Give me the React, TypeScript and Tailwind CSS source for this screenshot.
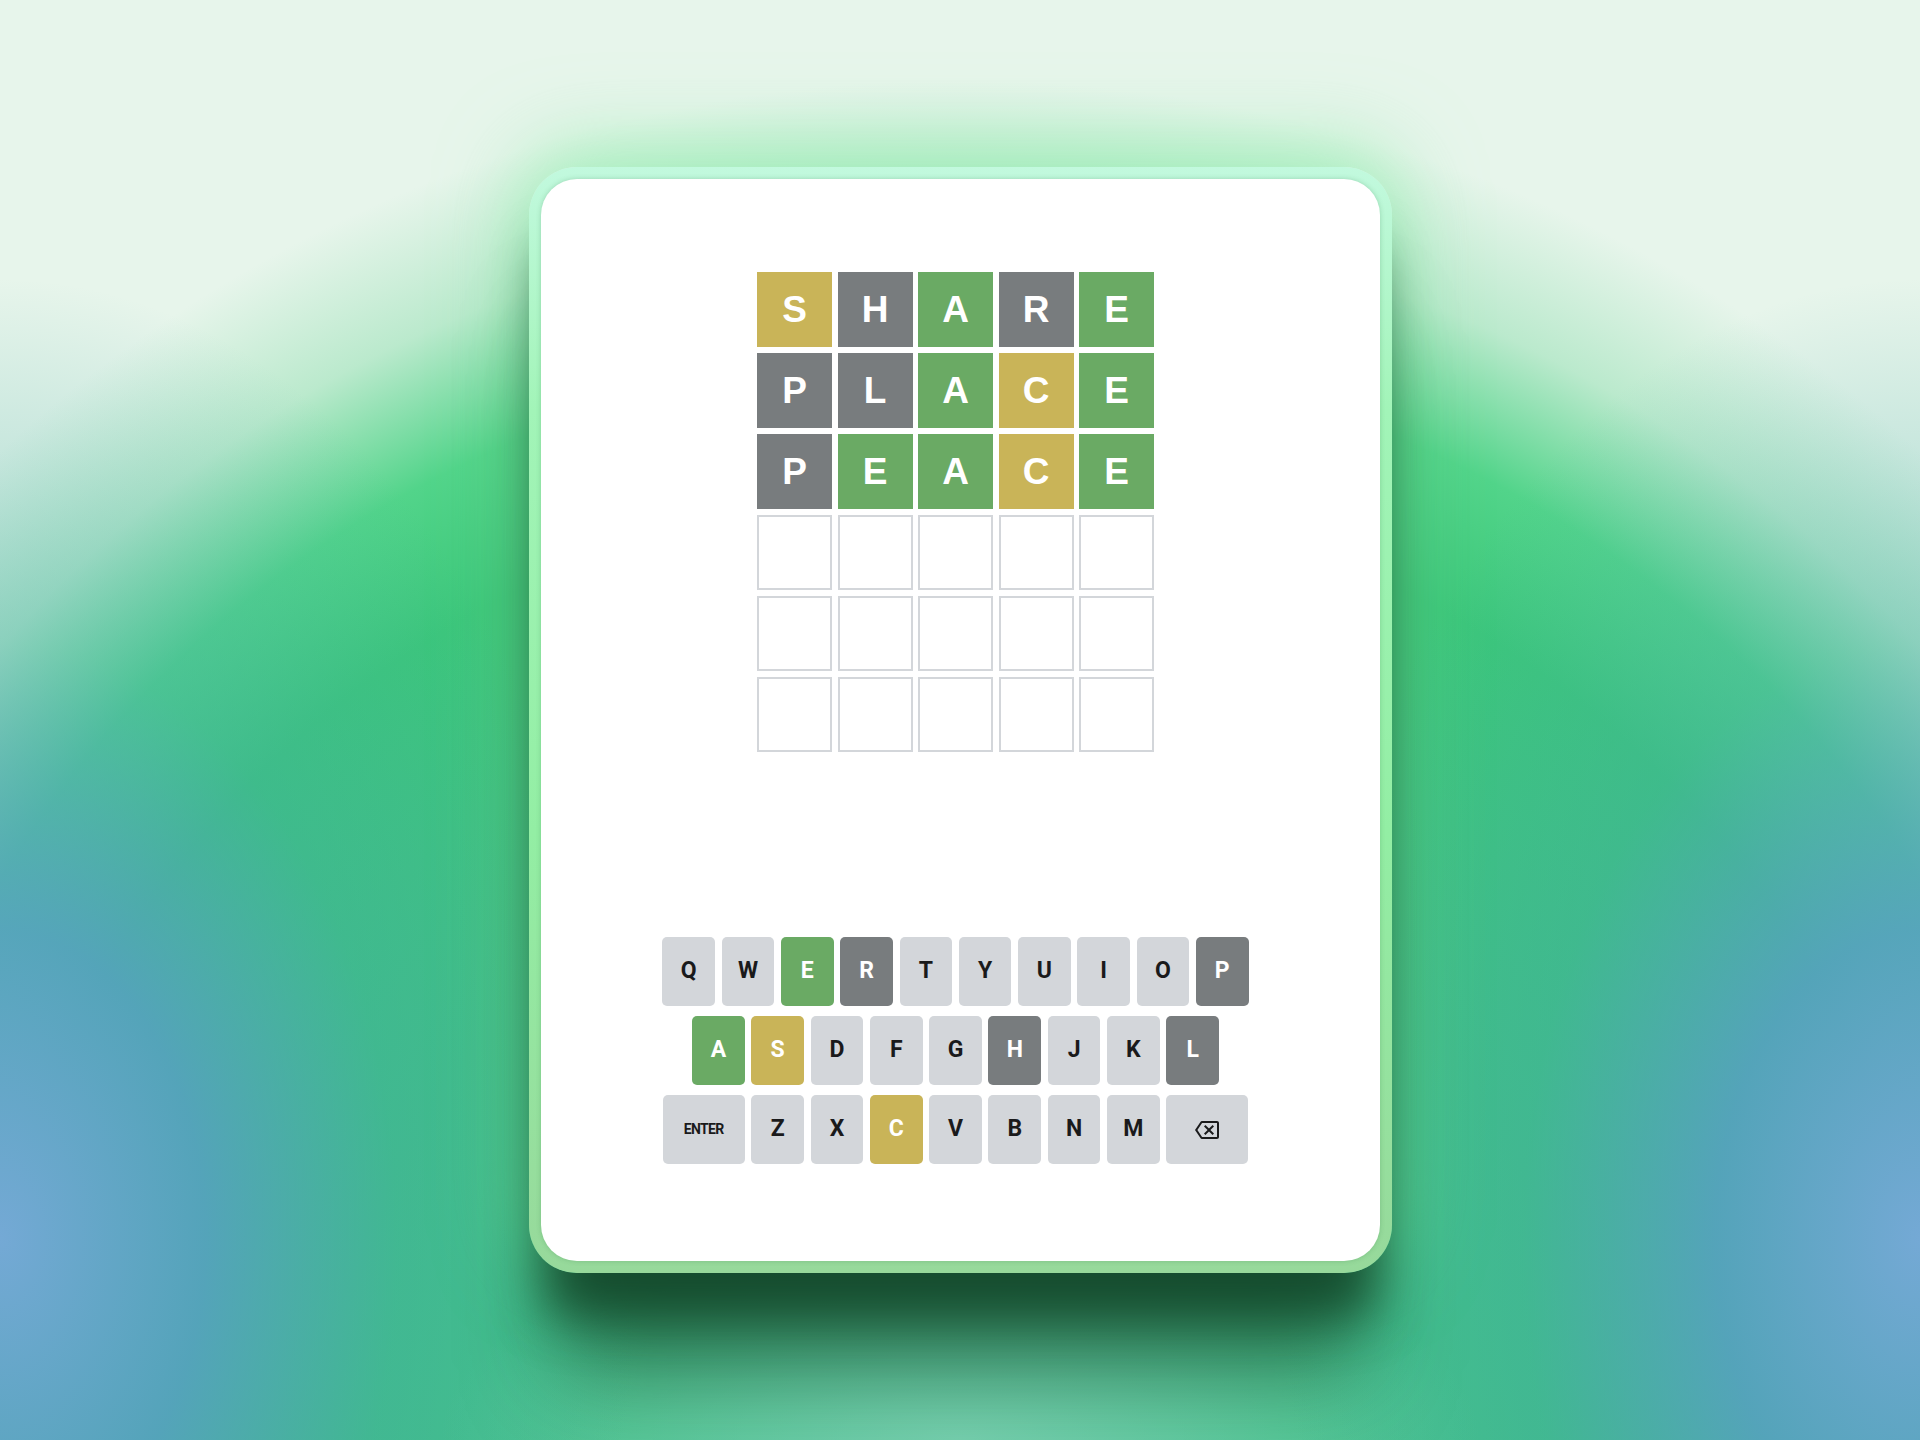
import React from "react";

type S = "g" | "y" | "x" | "e";

const rows: { l: string; s: S }[][] = [
  [
    { l: "S", s: "y" },
    { l: "H", s: "x" },
    { l: "A", s: "g" },
    { l: "R", s: "x" },
    { l: "E", s: "g" },
  ],
  [
    { l: "P", s: "x" },
    { l: "L", s: "x" },
    { l: "A", s: "g" },
    { l: "C", s: "y" },
    { l: "E", s: "g" },
  ],
  [
    { l: "P", s: "x" },
    { l: "E", s: "g" },
    { l: "A", s: "g" },
    { l: "C", s: "y" },
    { l: "E", s: "g" },
  ],
];

const keyState: Record<string, S> = {
  E: "g",
  A: "g",
  S: "y",
  C: "y",
  R: "x",
  P: "x",
  H: "x",
  L: "x",
};

function tileClass(s: S) {
  if (s === "g") return "bg-[#6aaa64] text-white";
  if (s === "y") return "bg-[#c9b458] text-white";
  if (s === "x") return "bg-[#787c7e] text-white";
  return "bg-white border-2 border-[#d3d6da]";
}

function keyClass(s: S | undefined) {
  if (s === "g") return "bg-[#6aaa64] text-white";
  if (s === "y") return "bg-[#c9b458] text-white";
  if (s === "x") return "bg-[#787c7e] text-white";
  return "bg-[#d3d6da] text-[#1a1a1b]";
}

function Tile({ l, s }: { l?: string; s: S }) {
  return (
    <div
      className={`w-[75px] h-[75px] flex items-center justify-center font-bold text-[37px] leading-none ${tileClass(s)}`}
      style={{ fontFamily: '"Liberation Sans", Arial, sans-serif' }}
    >
      {l}
    </div>
  );
}

function Key({ k, wide }: { k: string; wide?: boolean }) {
  return (
    <div
      className={`${wide ? "w-[82px]" : "w-[52.6px]"} h-[69px] rounded-[5px] flex items-center justify-center font-bold ${
        k === "ENTER" ? "text-[14px] tracking-[-0.6px]" : "text-[23px]"
      } ${keyClass(keyState[k])}`}
      style={{ fontFamily: "Roboto, Arial, sans-serif" }}
    >
      {k === "BACK" ? (
        <svg width="24" height="24" viewBox="0 0 24 24" fill="#1a1a1b">
          <path d="M22 3H7c-.69 0-1.23.35-1.59.88L0 12l5.41 8.11c.36.53.9.89 1.59.89h15c1.1 0 2-.9 2-2V5c0-1.1-.9-2-2-2zm0 16H7.07L2.4 12l4.66-7H22v14zm-11.59-2L14 13.41 17.59 17 19 15.59 15.41 12 19 8.41 17.59 7 14 10.59 10.41 7 9 8.41 12.59 12 9 15.59z" />
        </svg>
      ) : (
        k
      )}
    </div>
  );
}

export default function App() {
  const grid: { l?: string; s: S }[][] = [
    ...rows,
    ...Array.from({ length: 3 }, () => Array.from({ length: 5 }, () => ({ s: "e" as S }))),
  ];
  const kb = [
    ["Q", "W", "E", "R", "T", "Y", "U", "I", "O", "P"],
    ["A", "S", "D", "F", "G", "H", "J", "K", "L"],
    ["ENTER", "Z", "X", "C", "V", "B", "N", "M", "BACK"],
  ];
  return (
    <div className="w-full h-[1440px] overflow-hidden flex items-center justify-center bg-[#e7f5eb] bg-[radial-gradient(ellipse_640px_960px_at_0%_86%,rgba(118,168,216,0.97)_0%,rgba(88,158,196,0.85)_32%,rgba(66,170,165,0.4)_62%,rgba(70,175,165,0)_100%),radial-gradient(ellipse_640px_960px_at_100%_86%,rgba(118,168,216,0.97)_0%,rgba(88,158,196,0.85)_32%,rgba(66,170,165,0.4)_62%,rgba(70,175,165,0)_100%),radial-gradient(ellipse_520px_220px_at_50%_100%,rgba(130,212,182,0.8)_0%,rgba(130,212,182,0)_100%),radial-gradient(ellipse_1400px_1360px_at_50%_100%,#4cc596_0%,#40c184_45%,#3cc77a_70%,#52d48a_80%,rgba(150,224,180,0.55)_90%,rgba(231,245,235,0)_100%)]">
      <div className="w-[863px] h-[1106px] p-[12px] rounded-[48px] bg-[linear-gradient(180deg,#c2f9de_0%,#a2f4b8_22%,#93eea4_60%,#97d99b_100%)] shadow-[0_60px_50px_-15px_rgba(14,60,34,0.78),0_130px_90px_-30px_rgba(14,66,36,0.55),0_-10px_80px_10px_rgba(120,236,156,0.55)]">
        <div className="w-full h-full rounded-[36px] bg-white shadow-[0_0_5px_rgba(40,110,60,0.25)] flex flex-col items-center pt-[93px] pr-[9px]">
          <div className="flex flex-col gap-y-[6px]">
            {grid.map((r, i) => (
              <div key={i} className="flex gap-x-[5.5px]">
                {r.map((t, j) => (
                  <Tile key={j} l={t.l} s={t.s} />
                ))}
              </div>
            ))}
          </div>
          <div className="mt-[185px] flex flex-col items-center gap-y-[10px]">
            {kb.map((r, i) => (
              <div key={i} className="flex gap-x-[6.7px]">
                {r.map((k) => (
                  <Key key={k} k={k} wide={k === "ENTER" || k === "BACK"} />
                ))}
              </div>
            ))}
          </div>
        </div>
      </div>
    </div>
  );
}
